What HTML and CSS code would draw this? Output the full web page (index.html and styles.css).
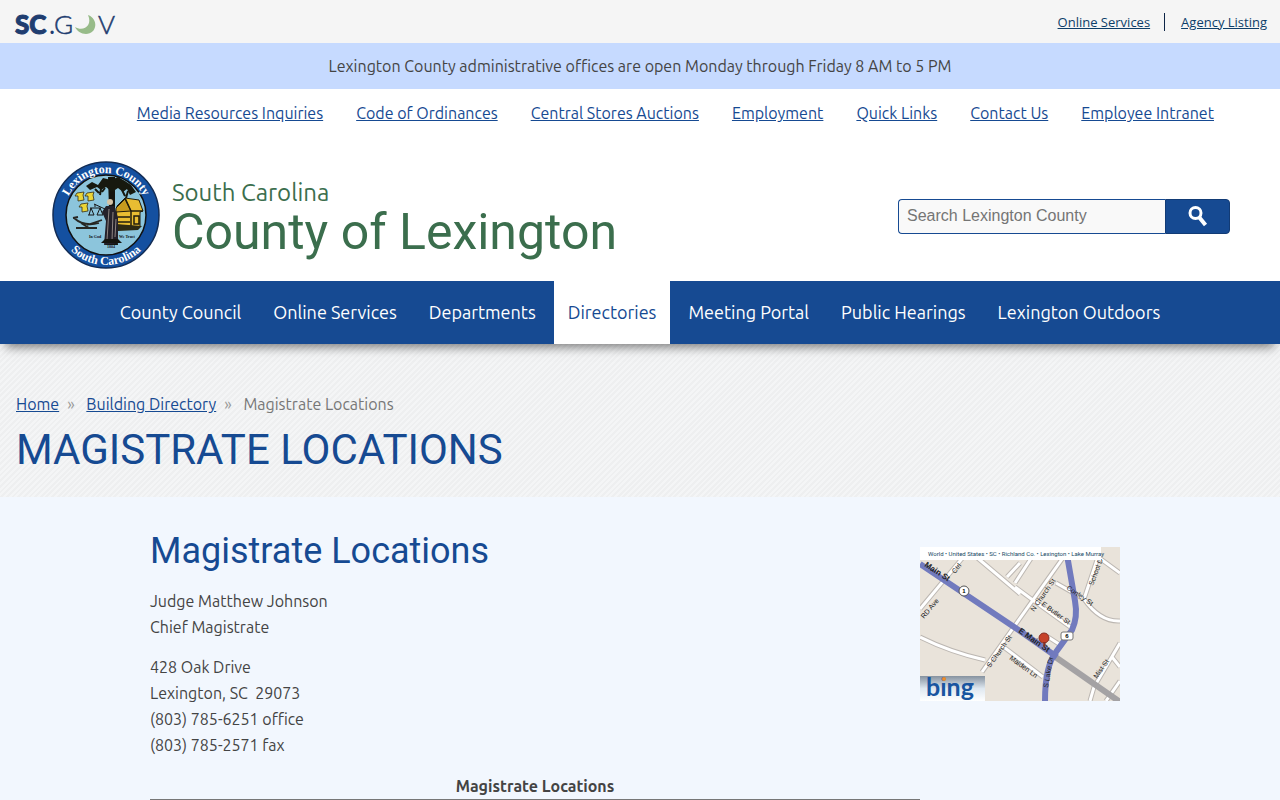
FILE: index.html
```html
<!DOCTYPE html>
<html lang="en">
  <head>
    <meta charset="UTF-8" />
    <meta name="viewport" content="width=device-width, initial-scale=1.0" />
    <title>Magistrate Locations</title>
    <link rel="stylesheet" href="styles.css">
  </head>
  <body>
    <div class="state-bar">
      <a href="#" class="state-logo" aria-label="SC.GOV">
        <svg width="102" height="36" viewBox="0 0 102 36">
          <g fill="#1f3d70" stroke="#1f3d70" font-family="Lato" font-size="26">
            <text x="1" y="30" font-weight="900" stroke-width="1">SC</text>
            <text x="35" y="30" stroke-width="0">.</text>
            <text x="40" y="30" font-weight="300" stroke-width="0.5">G</text>
            <text x="84" y="30" font-weight="300" stroke-width="0.5">V</text>
          </g>
          <path d="M74 11 C85 15 83 30 72 30 C67 30 63 27 61 23 C69 28 79 22 74 11Z" fill="#97bb89" />
        </svg>
      </a>
      <div class="state-links">
        <a href="#">Online Services</a>
        <a href="#">Agency Listing</a>
      </div>
    </div>

    <div class="notice">Lexington County administrative offices are open Monday through Friday 8 AM to 5 PM</div>

    <header>
      <div class="quick-links">
        <a href="#">Media Resources Inquiries</a>
        <a href="#">Code of Ordinances</a>
        <a href="#">Central Stores Auctions</a>
        <a href="#">Employment</a>
        <a href="#">Quick Links</a>
        <a href="#">Contact Us</a>
        <a href="#">Employee Intranet</a>
      </div>

      <div class="masthead">
        <a href="#" class="brand">
          <svg class="seal" width="108" height="108" viewBox="0 0 108 108">
            <defs>
              <path id="arc-top" d="M12 54 A42 42 0 0 1 96 54" />
              <path id="arc-bottom" d="M4 54 A50 50 0 0 0 104 54" />
            </defs>
            <circle cx="54" cy="54" r="53" fill="#1450a0" stroke="#122c55" stroke-width="1.5" />
            <circle cx="54" cy="54" r="40" fill="#8cc5dc" stroke="#111" stroke-width="1.5" />
            <!-- tree -->
            <path d="M56 16 L63 16 L63 48 L66 84 L53 84 L57 48Z" fill="#15150f" />
            <path d="M34 25 L40 21 L46 24 L51 17 L59 19 L66 16 L73 20 L79 24 L84 31 L78 34 L75 28 L71 31 L66 27 L60 31 L54 26 L49 29 L45 26 L38 29Z" fill="#17190f" />
            <path d="M43 28 l4 4 M49 28 l-1 6 M70 29 l3 6 M76 30 l-2 7 M53 27 l-3 4" stroke="#17190f" stroke-width="2" />
            <!-- cabin -->
            <path d="M65 45 L73 37 L87 39 L91 50 L88 51 L88 66 L64 64Z" fill="#e9bd32" stroke="#211c0d" />
            <path d="M64 47 L73 38 L79 50 L64 51Z" fill="#c89b1e" stroke="#211c0d" />
            <path d="M73 37 L79 50 L91 50 M66 56 H78 M66 61 H78 M79 50 V66 M82 55 H87 V63 H82Z" fill="none" stroke="#211c0d" stroke-width="1.5" />
            <path d="M63 63 L90 65 L86 69 L66 70Z" fill="#2e2a13" />
            <!-- justice -->
            <path d="M54 45 L62 45 L66 56 L66 82 L52 84 L54 60 L50 51Z" fill="#24212a" />
            <circle cx="58" cy="41" r="3" fill="#d6c4a6" />
            <path d="M57 48 L55 79 M61 51 L60 80 M64 58 L63 76" stroke="#a99e98" stroke-width="0.8" />
            <path d="M53 48 L42 43 M43 43 V46 M38 47 H49 M39 47 L37 54 M39 47 L42 54 M48 47 L45 54 M48 47 L51 54 M36 54 H42 M45 54 H51" fill="none" stroke="#171717" />
            <path d="M49 82 L53 78 H66 L70 82Z" fill="#15150f" />
            <!-- sheaves -->
            <g fill="#ebd637" stroke="#332d15" stroke-width="0.8">
              <path d="M25 32 l7 -1 -1 3 1 5 -6 1 0 -5 -3 0Z" />
              <path d="M35 32 l7 -1 -1 3 1 5 -6 1 0 -5 -3 0Z" />
              <path d="M29 43 l7 -1 -1 3 1 5 -6 1 0 -5 -3 0Z" />
            </g>
            <!-- plow -->
            <path d="M22 57 Q32 66 47 62 M24 67 H45 M29 62 L37 67 M35 64 L50 59 M21 57 L26 56" fill="none" stroke="#272723" stroke-width="1.8" />
            <g class="seal-small">
              <text x="37" y="77">In God</text>
              <text x="67" y="77">We Trust</text>
              <text x="55" y="87">1804</text>
            </g>
            <g class="seal-text">
              <text><textPath href="#arc-top" startOffset="50%" text-anchor="middle">Lexington County</textPath></text>
              <text><textPath href="#arc-bottom" startOffset="50%" text-anchor="middle">South Carolina</textPath></text>
            </g>
          </svg>
          <span class="brand-text">
            <span class="brand-state">South Carolina</span>
            <span class="brand-county">County of Lexington</span>
          </span>
        </a>

        <form class="search">
          <input type="text" placeholder="Search Lexington County" aria-label="Search Lexington County" />
          <button type="button" aria-label="Search">
            <svg width="22" height="22" viewBox="0 0 22 22">
              <circle cx="8.5" cy="8" r="5.5" fill="none" stroke="#fff" stroke-width="3" />
              <path d="M12 12 L18.5 20" stroke="#fff" stroke-width="4" />
            </svg>
          </button>
        </form>
      </div>
    </header>

    <nav>
      <a href="#">County Council</a>
      <a href="#">Online Services</a>
      <a href="#">Departments</a>
      <a href="#" class="active">Directories</a>
      <a href="#">Meeting Portal</a>
      <a href="#">Public Hearings</a>
      <a href="#">Lexington Outdoors</a>
    </nav>

    <div class="page-title">
      <div class="breadcrumbs">
        <a href="#">Home</a><span class="sep">»</span>
        <a href="#">Building Directory</a><span class="sep">»</span>
        <span>Magistrate Locations</span>
      </div>
      <h1>MAGISTRATE LOCATIONS</h1>
    </div>

    <main>
      <div class="details">
        <h2>Magistrate Locations</h2>
        <p>Judge Matthew Johnson<br />Chief Magistrate</p>
        <p>428 Oak Drive<br />Lexington, SC&nbsp; 29073<br />(803) 785-6251 office<br />(803) 785-2571 fax</p>
        <table>
          <thead>
            <tr>
              <th>Magistrate Locations</th>
            </tr>
          </thead>
        </table>
      </div>

      <a href="#" class="map" aria-label="Map">
        <svg width="200" height="154" viewBox="0 0 200 154">
          <defs>
            <linearGradient id="bing-bg" x1="0" y1="0" x2="0" y2="1">
              <stop offset="0" stop-color="#86929f" />
              <stop offset="0.5" stop-color="#dfe8f0" />
              <stop offset="1" stop-color="#fff" />
            </linearGradient>
          </defs>
          <rect width="200" height="154" fill="#e9e3da" />
          <g fill="none" stroke="#bcb7b2" stroke-width="5">
            <path d="M0 62 L45 8 M54 8 L100 47 M87 30 L100 16 M0 90 Q30 105 65 113 M62 125 L108 60 L145 8 M95 40 L114 54 L153 82 M81 98 L123 130 M136 36 L164 52 Q180 75 200 74 M164 52 L178 10 M178 10 L200 26 M170 154 L174 140 L200 96 M192 110 L200 120 M125 88 L142 99 M95 36 L112 10 M186 154 L200 134" />
          </g>
          <g fill="none" stroke="#fff" stroke-width="3">
            <path d="M0 62 L45 8 M54 8 L100 47 M87 30 L100 16 M0 90 Q30 105 65 113 M62 125 L108 60 L145 8 M95 40 L114 54 L153 82 M81 98 L123 130 M136 36 L164 52 Q180 75 200 74 M164 52 L178 10 M178 10 L200 26 M170 154 L174 140 L200 96 M192 110 L200 120 M125 88 L142 99 M95 36 L112 10 M186 154 L200 134" />
          </g>
          <path d="M134 109 L200 155" stroke="#a4a2a4" stroke-width="6" />
          <g fill="none" stroke="#717abe" stroke-width="6">
            <path d="M0 17 L100 84 L137 110" />
            <path d="M147 8 L155 54 Q158 70 152 83 L136 105 Q125 119 125 154" />
          </g>
          <g class="street-names">
            <text transform="translate(4 19) rotate(33)" font-size="8" font-weight="bold">Main St</text>
            <text transform="translate(35 27) rotate(-51)">Ctrl</text>
            <text transform="translate(4 72) rotate(-50)">RD Ave</text>
            <text transform="translate(70 121) rotate(-54)">S Church St</text>
            <text transform="translate(114 65) rotate(-55)">N Church St</text>
            <text transform="translate(121 58) rotate(36)">E Butler St</text>
            <text transform="translate(146 42) rotate(34)">Conley St</text>
            <text transform="translate(173 39) rotate(-69)">School D</text>
            <text transform="translate(98 85) rotate(35)" font-size="8" font-weight="bold">E Main St</text>
            <text transform="translate(89 112) rotate(36)">Maiden Ln</text>
            <text transform="translate(128 141) rotate(-80)">S Lake Dr</text>
            <text transform="translate(177 132) rotate(-55)">Mist St</text>
          </g>
          <circle cx="44" cy="44" r="5" fill="#fff" stroke="#555" />
          <rect x="141" y="85" width="12" height="8" rx="2" fill="#fff" stroke="#777" />
          <text class="route" x="44" y="46">1</text>
          <text class="route" x="147" y="91">6</text>
          <circle cx="124" cy="91" r="5" fill="#c64229" stroke="#862e24" />
          <path d="M123 95 L124 102 L126 95Z" fill="#862e24" />
          <rect width="181" height="13" fill="#fff" />
          <text class="map-trail" x="8" y="9">World • United States • SC • Richland Co. • Lexington • Lake Murray</text>
          <rect y="129" width="65" height="25" fill="url(#bing-bg)" />
          <text x="6" y="149" font-family="Lato" font-size="25" font-weight="700" fill="#1955a0">bing</text>
          <circle cx="24" cy="132" r="2" fill="#ef8d29" />
        </svg>
      </a>
    </main>
  </body>
</html>
```

FILE: styles.css
```css
* {
  box-sizing: border-box;
}

body {
  margin: 0;
  font-family: Ubuntu, "Noto Sans", "Open Sans", sans-serif;
  font-size: 16px;
  line-height: 26px;
  color: #444;
  background: #f2f7fe;
}

a {
  color: #164a92;
}

.state-bar {
  display: flex;
  justify-content: space-between;
  align-items: center;
  height: 43px;
  padding: 0 13px 0 14px;
  background: #f5f5f5;
}

.state-logo svg {
  display: block;
  overflow: visible;
}

.state-links {
  display: flex;
}

.state-links a {
  font-family: "Open Sans", sans-serif;
  font-size: 13px;
  line-height: 18px;
  color: #0d3e69;
}

.state-links a + a {
  margin-left: 14px;
  padding-left: 16px;
  border-left: 1px solid #0d2547;
}

.notice {
  padding: 10px;
  text-align: center;
  background: #c6daff;
}

header {
  background: #fff;
}

.quick-links {
  display: flex;
  justify-content: flex-end;
  gap: 33px;
  padding: 11px 66px;
}

.masthead {
  display: flex;
  justify-content: space-between;
  align-items: center;
  padding: 24px 50px 12px 52px;
}

.brand {
  display: flex;
  align-items: center;
  gap: 12px;
  color: #3b6e4d;
  text-decoration: none;
}

.seal {
  display: block;
}

.seal-text {
  font-family: "Liberation Serif", serif;
  font-size: 12px;
  font-weight: bold;
  fill: #fff;
}

.seal-small {
  font-family: "Liberation Serif", serif;
  font-size: 4px;
  font-weight: bold;
  fill: #111;
}

.brand-text {
  padding-top: 8px;
}

.brand-state,
.brand-county {
  display: block;
}

.brand-state {
  font-size: 24px;
  line-height: 26px;
}

.brand-county {
  font-family: Roboto, sans-serif;
  font-size: 50px;
  line-height: 52px;
}

.search {
  display: flex;
  width: 332px;
  height: 35px;
  margin-top: 2px;
}

.search input {
  flex: 1;
  min-width: 0;
  padding: 0 8px;
  font-family: "Liberation Sans", sans-serif;
  font-size: 16px;
  background: #f9f9f9;
  border: 1px solid #164a92;
  border-right: 0;
  border-radius: 4px 0 0 4px;
}

.search input::placeholder {
  color: #757575;
}

.search button {
  display: flex;
  justify-content: center;
  align-items: center;
  width: 65px;
  padding: 0;
  background: #164a92;
  border: 1px solid #123b75;
  border-radius: 0 4px 4px 0;
}

nav {
  position: relative;
  display: flex;
  justify-content: center;
  gap: 4px;
  background: #164a92;
  box-shadow: 0 9px 10px -6px rgba(0, 0, 0, 0.5);
}

nav a {
  padding: 0 14px;
  font-size: 18px;
  line-height: 63px;
  color: #fff;
  text-decoration: none;
}

nav .active {
  color: #164a92;
  background: #fff;
}

.page-title {
  padding: 47px 16px 20px;
  background: repeating-linear-gradient(135deg, #eeeff0 0, #eeeff0 2px, #f4f5f6 2px, #f4f5f6 4px);
}

.breadcrumbs {
  color: #777;
}

.breadcrumbs .sep {
  margin: 0 8px;
  color: #999;
}

h1,
h2 {
  margin: 0;
  font-family: Roboto, sans-serif;
  font-weight: 400;
  color: #164a92;
}

h1 {
  margin-top: 6px;
  font-size: 42px;
  line-height: 54px;
}

main {
  display: flex;
  justify-content: space-between;
  align-items: flex-start;
  max-width: 980px;
  margin: 0 auto;
}

.details {
  flex: 1;
  padding-top: 31px;
}

h2 {
  font-size: 36px;
  line-height: 46px;
}

p {
  margin: 14px 0;
}

table {
  width: 100%;
  margin-top: 15px;
  border-collapse: collapse;
}

th {
  padding: 0;
  border-bottom: 1px solid #777;
}

.map {
  margin: 50px 10px 0 0;
}

.map svg {
  display: block;
}

.map-trail {
  font-family: "Liberation Sans Narrow", Roboto, sans-serif;
  font-size: 6px;
  fill: #164964;
}

.street-names {
  font-family: "Liberation Sans", sans-serif;
  font-size: 7px;
  fill: #222;
}

.route {
  font-family: "Liberation Sans", sans-serif;
  font-size: 6px;
  font-weight: bold;
  text-anchor: middle;
}
```
